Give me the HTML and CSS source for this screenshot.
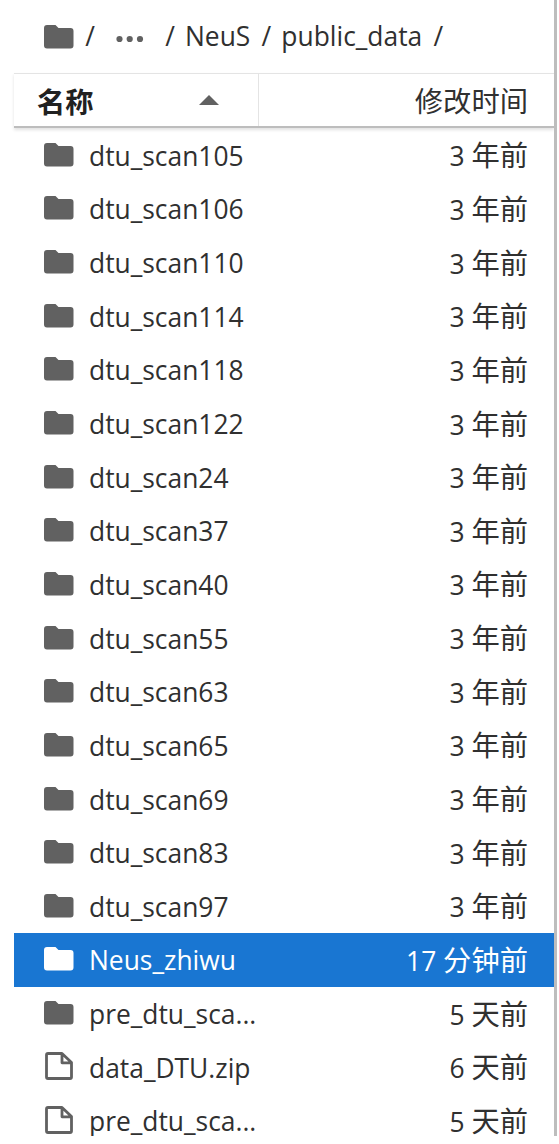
FILE: index.html
```html
<!DOCTYPE html>
<html lang="zh-CN">
<head>
  <meta charset="UTF-8">
  <meta name="viewport" content="width=device-width, initial-scale=1.0">
  <title>public_data</title>
  <link rel="stylesheet" href="styles.css">
</head>
<body>

  <svg width="0" height="0" class="defs">
    <symbol id="folder" viewBox="0 0 30 24">
      <path d="M3 0h8.500l3 3H26.500a3 3 0 0 1 3 3V20.500a3 3 0 0 1-3 3H3a3 3 0 0 1-3-3V3a3 3 0 0 1 3-3z"/>
    </symbol>
    <symbol id="file" viewBox="0 0 30 30">
      <path d="M4 2.500h14l9.500 9V26a1.500 1.500 0 0 1-1.500 1.500H4A1.500 1.500 0 0 1 2.500 26V4A1.500 1.500 0 0 1 4 2.500zM18 3v8.800H27" fill="none" stroke="currentColor" stroke-width="2.800" stroke-linejoin="round"/>
    </symbol>
  </svg>

  <div class="browser">
    <div class="crumbs">
      <svg class="folder"><use href="#folder"/></svg>
      <span class="slash">/</span>
      <svg class="dots" viewBox="0 0 28 8"><circle cx="3.500" cy="4" r="3.100"/><circle cx="13.700" cy="4" r="3.100"/><circle cx="24" cy="4" r="3.100"/></svg>
      <span class="slash">/</span>
      <span class="crumb">NeuS</span>
      <span class="slash">/</span>
      <span class="crumb">public_data</span>
      <span class="slash">/</span>
    </div>

    <div class="header">
      <div class="header-name">
        <span>名称</span>
        <svg class="caret" viewBox="0 0 20 10"><path d="M0 10L10 0l10 10z"/></svg>
      </div>
      <div class="header-time">修改时间</div>
    </div>

    <ul class="list" id="list"></ul>
  </div>

  <script>
    const items = [
      ['dtu_scan105', '3', '年前'],
      ['dtu_scan106', '3', '年前'],
      ['dtu_scan110', '3', '年前'],
      ['dtu_scan114', '3', '年前'],
      ['dtu_scan118', '3', '年前'],
      ['dtu_scan122', '3', '年前'],
      ['dtu_scan24', '3', '年前'],
      ['dtu_scan37', '3', '年前'],
      ['dtu_scan40', '3', '年前'],
      ['dtu_scan55', '3', '年前'],
      ['dtu_scan63', '3', '年前'],
      ['dtu_scan65', '3', '年前'],
      ['dtu_scan69', '3', '年前'],
      ['dtu_scan83', '3', '年前'],
      ['dtu_scan97', '3', '年前'],
      ['Neus_zhiwu', '17', '分钟前', 'folder', true],
      ['pre_dtu_sca...', '5', '天前'],
      ['data_DTU.zip', '6', '天前', 'file'],
      ['pre_dtu_sca...', '5', '天前', 'file']
    ];

    document.getElementById('list').innerHTML = items.map(([name, num, unit, icon = 'folder', selected]) => `
      <li class="item${selected ? ' selected' : ''}">
        <svg class="${icon}"><use href="#${icon}"/></svg>
        <span class="name">${name}</span>
        <span class="time">${num} <span class="unit">${unit}</span></span>
      </li>`).join('');
  </script>

</body>
</html>
```
FILE: styles.css
```css
* {
  box-sizing: border-box;
}

body {
  margin: 0;
  background-color: #ffffff;
  color: #303030;
  font-family: "Open Sans", "Noto Sans CJK SC", sans-serif;
  font-size: 26.4px;
}

svg {
  flex: none;
  fill: currentColor;
  color: #616161;
}

.defs {
  display: block;
}

.browser {
  width: 557px;
  height: 1136px;
  padding-left: 14px;
  border-right: 3px solid #bdbdbd;
  overflow: hidden;
}

.crumbs {
  display: flex;
  align-items: center;
  height: 73px;
  padding-left: 30px;
  line-height: 73px;
  white-space: nowrap;
}

.folder {
  width: 30px;
  height: 24px;
}

.slash {
  width: 12px;
  margin: 0 9px 0 10px;
  text-align: center;
}

.dots {
  width: 28px;
  height: 8px;
  margin: 4px 10px 0 11px;
}

.header {
  display: flex;
  height: 55px;
  border-top: 1.5px solid #e4e4e4;
  border-bottom: 2px solid #bdbdbd;
  box-shadow: 0 2px 3px rgba(0, 0, 0, 0.12);
  font-family: "Noto Sans CJK SC", sans-serif;
  font-size: 28.3px;
  line-height: 51px;
}

.header-name {
  display: flex;
  align-items: center;
  justify-content: space-between;
  width: 245px;
  padding: 0 39px 0 23px;
  border-right: 1.5px solid #e4e4e4;
  color: #212121;
  font-weight: bold;
}

.caret {
  width: 20px;
  height: 10px;
}

.header-time {
  flex: 1;
  padding-right: 26px;
  text-align: right;
}

.list {
  margin: 0;
  padding: 0.5px 0 0;
  list-style: none;
}

.item {
  display: flex;
  align-items: center;
  height: 53.65px;
  padding: 0 26px 0 30px;
  line-height: 53px;
  white-space: nowrap;
}

.item .folder {
  margin-bottom: 1px;
}

.file {
  width: 30px;
  height: 30px;
  margin-bottom: 2px;
}

.name {
  flex: 1;
  margin-left: 15px;
  padding-top: 2px;
}

.unit {
  font-family: "Noto Sans CJK SC", sans-serif;
  font-size: 28.3px;
}

.selected {
  background-color: #1976d2;
  color: #ffffff;
}

.selected svg {
  color: #ffffff;
}
```
